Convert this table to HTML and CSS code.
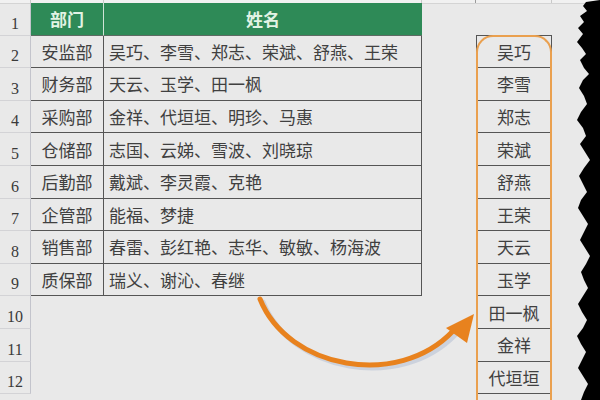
FILE: index.html
```html
<!DOCTYPE html>
<html lang="zh">
<head>
<meta charset="utf-8">
<link rel="stylesheet" href="styles.css">
</head>
<body>
<div class="page">
  <div class="strip">
    <span class="sc sc-rh"></span><span class="sc sc-a"></span><span class="sc sc-b"></span><span class="sc sc-gap"></span><span class="sc sc-pick"></span>
  </div>
  <div class="sheet">
    <div class="rh">1</div><div class="hd hd-dept">部门</div><div class="hd hd-names">姓名</div><div class="gap"></div><div class="pick pick-top"></div><div class="rest"></div>
    <div class="rh">2</div><div class="dept">安监部</div><div class="names">吴巧、李雪、郑志、荣斌、舒燕、王荣</div><div class="gap"></div><div class="pick">吴巧</div><div class="rest"></div>
    <div class="rh">3</div><div class="dept">财务部</div><div class="names">天云、玉学、田一枫</div><div class="gap"></div><div class="pick">李雪</div><div class="rest"></div>
    <div class="rh">4</div><div class="dept">采购部</div><div class="names">金祥、代垣垣、明珍、马惠</div><div class="gap"></div><div class="pick">郑志</div><div class="rest"></div>
    <div class="rh">5</div><div class="dept">仓储部</div><div class="names">志国、云娣、雪波、刘晓琼</div><div class="gap"></div><div class="pick">荣斌</div><div class="rest"></div>
    <div class="rh">6</div><div class="dept">后勤部</div><div class="names">戴斌、李灵霞、克艳</div><div class="gap"></div><div class="pick">舒燕</div><div class="rest"></div>
    <div class="rh">7</div><div class="dept">企管部</div><div class="names">能福、梦捷</div><div class="gap"></div><div class="pick">王荣</div><div class="rest"></div>
    <div class="rh">8</div><div class="dept">销售部</div><div class="names">春雷、彭红艳、志华、敏敏、杨海波</div><div class="gap"></div><div class="pick">天云</div><div class="rest"></div>
    <div class="rh">9</div><div class="dept">质保部</div><div class="names">瑞义、谢沁、春继</div><div class="gap"></div><div class="pick">玉学</div><div class="rest"></div>
    <div class="rh">10</div><div class="blank"></div><div class="blank"></div><div class="gap"></div><div class="pick">田一枫</div><div class="rest"></div>
    <div class="rh">11</div><div class="blank"></div><div class="blank"></div><div class="gap"></div><div class="pick">金祥</div><div class="rest"></div>
    <div class="rh">12</div><div class="blank"></div><div class="blank"></div><div class="gap"></div><div class="pick">代垣垣</div><div class="rest"></div>
  </div>

  <div class="highlight"></div>

  <svg class="arrow" width="600" height="400" viewBox="0 0 600 400">
    <path d="M263 302 C 291 372, 401 392, 456 334" fill="none" stroke="#b9c3d6" stroke-width="5" stroke-linecap="round" opacity="0.6"/>
    <path d="M260 299 C 288 369, 398 389, 453 331" fill="none" stroke="#e8821e" stroke-width="5" stroke-linecap="round"/>
    <polygon points="446,328 474,314 467,343" fill="#e8821e"/>
  </svg>

  <svg class="torn" width="600" height="400" viewBox="0 0 600 400">
    <path d="M600 0 L586 2 L583 6 L587 11 L580 16 L584 22 L578 28 L583 34 L577 42 L582 48 L586 54 L580 60 L584 68 L589 74 L583 80 L579 88 L584 96 L587 104 L581 112 L577 120 L583 128 L586 136 L580 144 L585 152 L590 160 L584 168 L579 176 L583 184 L587 192 L581 200 L578 208 L583 216 L588 224 L584 232 L580 240 L585 248 L590 256 L586 264 L581 272 L584 280 L588 288 L583 296 L578 304 L582 312 L587 320 L583 328 L577 336 L581 344 L586 352 L582 360 L578 368 L583 376 L588 384 L584 392 L581 400 L600 400 Z" fill="#000"/>
  </svg>
</div>
</body>
</html>
```

FILE: styles.css
```css
* { box-sizing: border-box; }

html, body {
  margin: 0;
  padding: 0;
  background: #e9e9e9;
}

.page {
  position: relative;
  width: 600px;
  height: 400px;
  overflow: hidden;
  font-family: "Noto Sans CJK SC", "Noto Sans", sans-serif;
  color: #333;
}

.strip {
  display: grid;
  grid-template-columns: 31px 73px 318px 54px 76px 1fr;
  height: 4px;
  background: #f1f1f1;
  border-bottom: 1px solid #d4d4d4;
}

.sc { border-right: 1px solid #c9c9c9; }
.sc-gap { border-right-color: #9a9a9a; }

.sheet {
  display: grid;
  grid-template-columns: 31px 73px 318px 54px 76px 1fr;
  grid-auto-rows: 32.6px;
  margin-top: -1px;
}

.rh {
  border-right: 1px solid #c3c4cc;
  border-bottom: 1px solid #d3d3d6;
  font-family: "Liberation Serif", serif;
  font-size: 16px;
  color: #3a3a3a;
  display: flex;
  align-items: flex-end;
  justify-content: center;
  padding-bottom: 2px;
}

.hd {
  background: #2e8a57;
  color: #e2f3e4;
  font-weight: bold;
  font-size: 17px;
  display: flex;
  align-items: center;
  justify-content: center;
  border-bottom: 1px solid #5d6b63;
}

.hd-dept { border-right: 1px solid #cfe3d6; }

.dept, .names {
  font-size: 17px;
  display: flex;
  align-items: center;
  border-right: 1px solid #555;
  border-bottom: 1px solid #555;
  color: #404040;
}

.dept { justify-content: center; }
.names { padding-left: 5px; }

.pick {
  font-size: 17px;
  display: flex;
  align-items: center;
  justify-content: center;
  border-left: 1px solid #555;
  border-right: 1px solid #555;
  border-bottom: 1px solid #555;
  color: #404040;
}

.pick-top {
  border-left: none;
  border-right: none;
  border-bottom: 1px solid #555;
}

.highlight {
  position: absolute;
  left: 476px;
  top: 35px;
  width: 76px;
  height: 400px;
  border: 2px solid #eaa04f;
  border-bottom: none;
  border-radius: 17px 17px 0 0;
}

.arrow, .torn {
  position: absolute;
  left: 0;
  top: 0;
}
```
